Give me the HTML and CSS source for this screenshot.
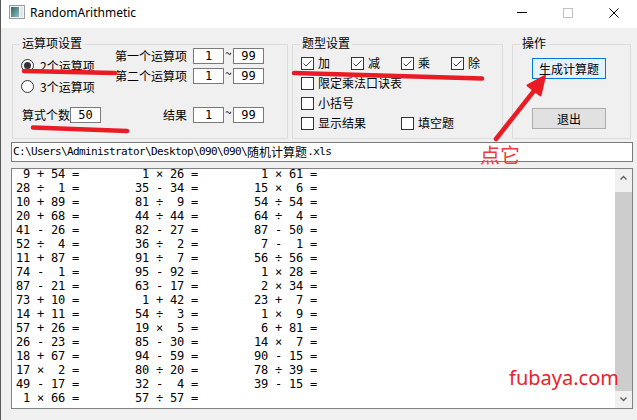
FILE: index.html
```html
<!DOCTYPE html>
<html>
<head>
<meta charset="utf-8">
<link rel="stylesheet" href="styles.css">
</head>
<body>
<div class="win">
  <div class="titlebar">
    <svg class="appicon" width="16" height="14" viewBox="0 0 16 14">
      <defs><linearGradient id="ig" x1="0" y1="0" x2="1" y2="1"><stop offset="0" stop-color="#2f6a55"/><stop offset="1" stop-color="#8fbccd"/></linearGradient></defs>
      <rect x="0.5" y="0.5" width="15" height="13" fill="#f3f3f3" stroke="#9c9c9c"/>
      <rect x="2" y="2" width="8" height="10" fill="url(#ig)"/>
      <rect x="11" y="2" width="3" height="10" fill="#e2e6e8"/>
    </svg>
    <span class="title">RandomArithmetic</span>
    <div class="ctrls">
      <div class="ctrl"><svg width="10" height="10"><path d="M0 4.5H10" stroke="#000"/></svg></div>
      <div class="ctrl"><svg width="10" height="10"><rect x="0.5" y="0.5" width="9" height="9" fill="none" stroke="#c2c2c2"/></svg></div>
      <div class="ctrl"><svg width="10" height="10"><path d="M0.5 0.5L9.5 9.5M9.5 0.5L0.5 9.5" stroke="#000"/></svg></div>
    </div>
  </div>

  <div class="client">
    <div class="groups">
      <div class="group g1">
        <span class="gtitle">运算项设置</span>
        <div class="g1-top">
          <div class="radios">
            <div class="radio-row"><span class="radio on"></span>2个运算项</div>
            <div class="radio-row"><span class="radio"></span>3个运算项</div>
          </div>
          <div class="ranges">
            <div class="range"><span class="range-label">第一个运算项</span><span class="num">1</span><span class="tilde">~</span><span class="num">99</span></div>
            <div class="range"><span class="range-label">第二个运算项</span><span class="num">1</span><span class="tilde">~</span><span class="num">99</span></div>
          </div>
        </div>
        <div class="g1-bottom">
          <span class="count-label">算式个数</span><span class="num">50</span>
          <div class="range result"><span class="range-label">结果</span><span class="num">1</span><span class="tilde">~</span><span class="num">99</span></div>
        </div>
      </div>

      <div class="group g2">
        <span class="gtitle">题型设置</span>
        <div class="cb-row">
          <div class="cb-cell w50"><span class="cb"><svg width="11" height="11" viewBox="0 0 11 11"><path d="M1.5 5.5L4 8L9.5 2.5" stroke="#444" fill="none"/></svg></span>加</div>
          <div class="cb-cell w50"><span class="cb"><svg width="11" height="11" viewBox="0 0 11 11"><path d="M1.5 5.5L4 8L9.5 2.5" stroke="#444" fill="none"/></svg></span>减</div>
          <div class="cb-cell w50"><span class="cb"><svg width="11" height="11" viewBox="0 0 11 11"><path d="M1.5 5.5L4 8L9.5 2.5" stroke="#444" fill="none"/></svg></span>乘</div>
          <div class="cb-cell w50"><span class="cb"><svg width="11" height="11" viewBox="0 0 11 11"><path d="M1.5 5.5L4 8L9.5 2.5" stroke="#444" fill="none"/></svg></span>除</div>
        </div>
        <div class="cb-row"><div class="cb-cell"><span class="cb"></span>限定乘法口诀表</div></div>
        <div class="cb-row"><div class="cb-cell"><span class="cb"></span>小括号</div></div>
        <div class="cb-row">
          <div class="cb-cell w100"><span class="cb"></span>显示结果</div>
          <div class="cb-cell"><span class="cb"></span>填空题</div>
        </div>
      </div>

      <div class="group g3">
        <span class="gtitle">操作</span>
        <div class="btn primary">生成计算题</div>
        <div class="btn plain">退出</div>
      </div>
    </div>

    <div class="path">C:\Users\Administrator\Desktop\090\090\<span class="cjk">随机计算题</span>.xls</div>

    <div class="output">
      <div class="eqs">
        <span> 9 + 54 =</span><span> 1 × 26 =</span><span> 1 × 61 =</span>
        <span>28 ÷  1 =</span><span>35 - 34 =</span><span>15 ×  6 =</span>
        <span>10 + 89 =</span><span>81 ÷  9 =</span><span>54 ÷ 54 =</span>
        <span>20 + 68 =</span><span>44 ÷ 44 =</span><span>64 ÷  4 =</span>
        <span>41 - 26 =</span><span>82 - 27 =</span><span>87 - 50 =</span>
        <span>52 ÷  4 =</span><span>36 ÷  2 =</span><span> 7 -  1 =</span>
        <span>11 + 87 =</span><span>91 ÷  7 =</span><span>56 ÷ 56 =</span>
        <span>74 -  1 =</span><span>95 - 92 =</span><span> 1 × 28 =</span>
        <span>87 - 21 =</span><span>63 - 17 =</span><span> 2 × 34 =</span>
        <span>73 + 10 =</span><span> 1 + 42 =</span><span>23 +  7 =</span>
        <span>14 + 11 =</span><span>54 ÷  3 =</span><span> 1 ×  9 =</span>
        <span>57 + 26 =</span><span>19 ×  5 =</span><span> 6 + 81 =</span>
        <span>26 - 23 =</span><span>85 - 30 =</span><span>14 ×  7 =</span>
        <span>18 + 67 =</span><span>94 - 59 =</span><span>90 - 15 =</span>
        <span>17 ×  2 =</span><span>80 ÷ 20 =</span><span>78 ÷ 39 =</span>
        <span>49 - 17 =</span><span>32 -  4 =</span><span>39 - 15 =</span>
        <span> 1 × 66 =</span><span>57 ÷ 57 =</span>
      </div>
      <div class="scroll">
        <div class="sb-btn"><svg width="7" height="5" viewBox="0 0 7 5"><path d="M0.5 4.5L3.5 1.5L6.5 4.5" stroke="#606060" stroke-width="1.4" fill="none"/></svg></div>
        <div class="sb-track"><div class="thumb"></div></div>
        <div class="sb-btn"><svg width="7" height="5" viewBox="0 0 7 5"><path d="M0.5 0.5L3.5 3.5L6.5 0.5" stroke="#606060" stroke-width="1.4" fill="none"/></svg></div>
      </div>
    </div>
  </div>

  <svg class="marks" width="637" height="420" viewBox="0 0 637 420">
    <g stroke="#ea1b25" stroke-width="4.5" stroke-linecap="round" fill="none">
      <path d="M24 71L115 73"/>
      <path d="M33 127.5L127 131"/>
      <path d="M294 73L482 78.5"/>
      <path d="M496 139L537 87"/>
    </g>
    <polygon points="545,76 527.5,85.5 540.5,95.5" fill="#ea1b25" stroke="#ea1b25" stroke-width="2" stroke-linejoin="round"/>
  </svg>
  <div class="note">点它</div>
  <div class="wm">fubaya.com</div>
</div>
</body>
</html>
```

FILE: styles.css
```css
* { box-sizing: border-box; }
body {
  margin: 0;
  background: #f0f0f0;
  font-family: "Noto Sans CJK SC", "Noto Sans", sans-serif;
  font-size: 12px;
  line-height: 16px;
  color: #000;
}
.win {
  position: relative;
  width: 637px;
  height: 420px;
  border-left: 1px solid #585858;
  background: #f0f0f0;
  overflow: hidden;
}
.titlebar {
  height: 28px;
  background: #fff;
  display: flex;
  align-items: flex-start;
}
.appicon { margin: 5px 0 0 8px; }
.title {
  margin: 5px 0 0 5px;
  font-family: "Noto Sans", sans-serif;
  font-size: 12px;
  line-height: 16px;
}
.ctrls { margin-left: auto; display: flex; }
.ctrl {
  width: 46px;
  height: 28px;
  display: flex;
  justify-content: center;
  padding-top: 8px;
}
.ctrl svg { display: block; }

.client { padding: 16px 0 0 10px; }
.groups { display: flex; margin-left: 1px; }
.group {
  position: relative;
  border: 1px solid #dcdcdc;
  height: 95px;
}
.gtitle {
  position: absolute;
  top: -10px;
  left: 7px;
  padding: 0 2px;
  background: #f0f0f0;
  line-height: 16px;
  white-space: nowrap;
}
.g1 { width: 276px; padding-top: 3px; }
.g2 { width: 211px; margin-left: 4px; padding-top: 8px; }
.g3 { width: 119px; margin-left: 9px; padding: 13px 0 0 19px; }

.g1-top { display: flex; }
.radios { width: 102px; padding-top: 7px; }
.radio-row {
  height: 21px;
  display: flex;
  align-items: center;
  padding-left: 8px;
  white-space: nowrap;
}
.radio {
  width: 13px;
  height: 13px;
  border: 1px solid #333;
  border-radius: 50%;
  background: #fff;
  margin-right: 6px;
  display: flex;
  align-items: center;
  justify-content: center;
}
.radio.on::after {
  content: "";
  width: 7px;
  height: 7px;
  border-radius: 50%;
  background: #333;
}
.ranges { display: flex; flex-direction: column; gap: 4px; }
.range { display: flex; align-items: center; height: 16px; }
.range-label {
  width: 72px;
  text-align: right;
  margin-right: 6px;
  white-space: nowrap;
}
.num {
  width: 31px;
  height: 16px;
  border: 1px solid #7a7a7a;
  background: #fff;
  font-family: "DejaVu Sans Mono", monospace;
  font-size: 12px;
  line-height: 14px;
  text-align: center;
}
.tilde {
  width: 9px;
  padding-left: 1px;
  align-self: flex-start;
  line-height: 10px;
}
.g1-bottom {
  display: flex;
  align-items: center;
  margin-top: 10px;
  padding-left: 9px;
}
.count-label { width: 48px; white-space: nowrap; }
.result { margin-left: 14px; }

.cb-row { display: flex; height: 20px; align-items: center; }
.cb-cell {
  display: flex;
  align-items: center;
  padding-left: 8px;
  white-space: nowrap;
}
.w50 { width: 50px; }
.w100 { width: 100px; }
.cb {
  width: 13px;
  height: 13px;
  border: 1px solid #333;
  background: #fff;
  margin-right: 4px;
  flex: none;
}
.cb svg { display: block; }

.btn {
  width: 74px;
  height: 21px;
  display: flex;
  align-items: center;
  justify-content: center;
}
.btn.primary { border: 1px solid #0078d7; background: #e5f1fb; }
.btn.plain { border: 1px solid #adadad; background: #e1e1e1; margin-top: 29px; }

.path {
  margin-top: 3px;
  width: 622px;
  height: 20px;
  border: 1px solid #7a7a7a;
  background: #fff;
  padding-left: 1px;
  display: flex;
  align-items: center;
  font-family: "DejaVu Sans Mono", monospace;
  font-size: 11px;
  letter-spacing: -0.62px;
  white-space: pre;
}
.path .cjk {
  font-family: "Noto Sans CJK SC", sans-serif;
  font-size: 12px;
  letter-spacing: 0;
}

.output {
  margin-top: 6px;
  width: 622px;
  height: 241px;
  border: 1px solid #828282;
  background: #fff;
  display: flex;
  overflow: hidden;
}
.eqs {
  flex: 1;
  margin-top: -2px;
  padding-left: 4px;
  display: grid;
  grid-template-columns: repeat(3, 119px);
  grid-auto-rows: 14px;
  font-family: "DejaVu Sans Mono", monospace;
  font-size: 12px;
  line-height: 14px;
  letter-spacing: -0.22px;
}
.eqs span { white-space: pre; }
.scroll {
  width: 17px;
  display: flex;
  flex-direction: column;
  background: #f0f0f0;
}
.sb-btn {
  height: 17px;
  display: flex;
  align-items: center;
  justify-content: center;
}
.sb-btn svg { display: block; }
.sb-track { flex: 1; padding-top: 6px; }
.thumb { height: 100%; background: #cdcdcd; }

.marks {
  position: absolute;
  left: -1px;
  top: 0;
  pointer-events: none;
}
.note {
  position: absolute;
  left: 479px;
  top: 145px;
  font-family: "Noto Sans CJK SC", sans-serif;
  font-size: 20px;
  line-height: 20px;
  color: #ee3b3b;
}
.wm {
  position: absolute;
  left: 508px;
  top: 368px;
  font-family: "Noto Sans", sans-serif;
  font-size: 20px;
  line-height: 20px;
  color: #e8232b;
}
```
